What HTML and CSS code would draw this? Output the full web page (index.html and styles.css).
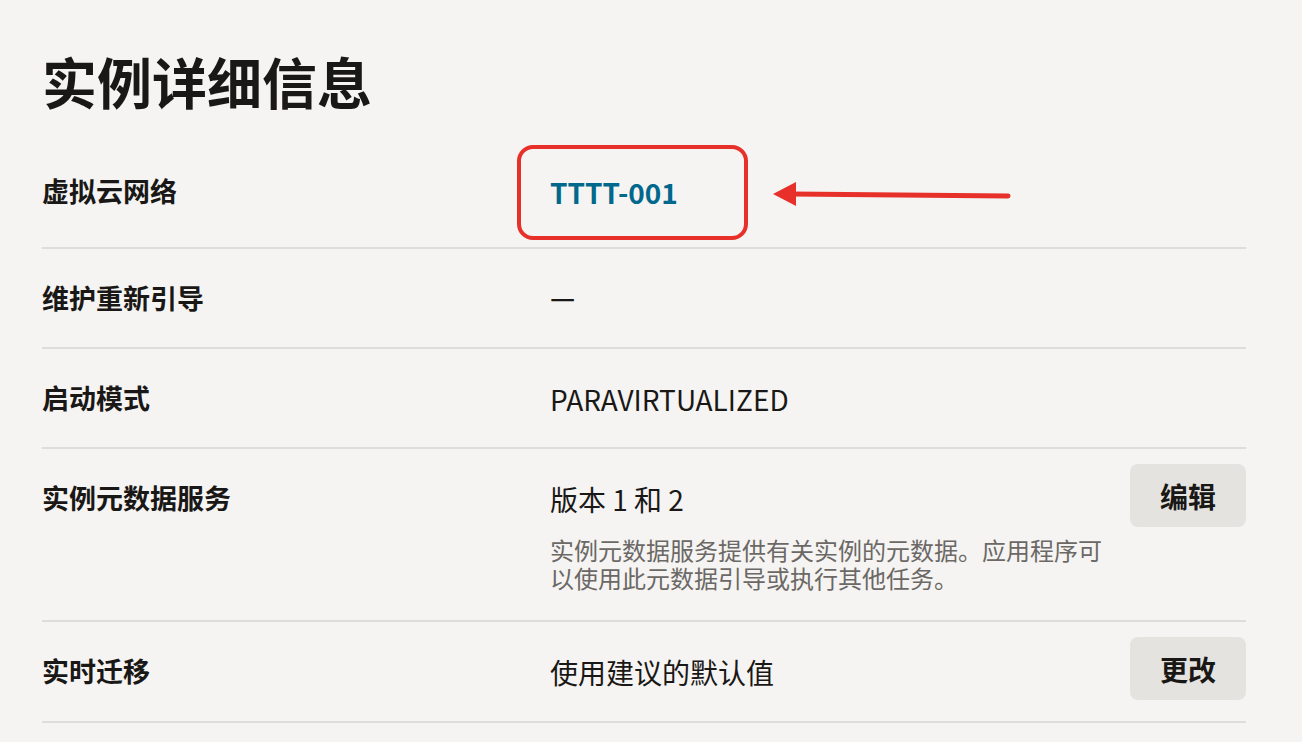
FILE: index.html
```html
<!DOCTYPE html>
<html>
    <head>
        <meta charset="utf-8">
        <title>实例详细信息</title>
        <link rel="stylesheet" href="styles.css">
    </head>
    <body>
        <div class="page">
            <h1 class="title">实例详细信息</h1>
            <div class="list">
                <div class="row first">
                    <div class="label">虚拟云网络</div>
                    <div class="value"><a class="link" href="#">TTTT-001</a></div>
                    <div class="mark"></div>
                    <svg class="arrow" width="245" height="30" viewBox="0 0 245 30">
                        <line x1="22" y1="14" x2="238" y2="16" stroke="#e8302a" stroke-width="5" stroke-linecap="round"/>
                        <polygon points="3,14 26,2 26,26" fill="#e8302a"/>
                    </svg>
                </div>
                <div class="row">
                    <div class="label">维护重新引导</div>
                    <div class="value"><span class="dash">—</span></div>
                </div>
                <div class="row">
                    <div class="label">启动模式</div>
                    <div class="value">PARAVIRTUALIZED</div>
                </div>
                <div class="row">
                    <div class="label">实例元数据服务</div>
                    <div class="value">
                        版本 1 和 2
                        <p class="desc">实例元数据服务提供有关实例的元数据。应用程序可以使用此元数据引导或执行其他任务。</p>
                    </div>
                    <button class="btn">编辑</button>
                </div>
                <div class="row">
                    <div class="label">实时迁移</div>
                    <div class="value">使用建议的默认值</div>
                    <button class="btn">更改</button>
                </div>
            </div>
        </div>
    </body>
</html>
```
FILE: styles.css
```css
*{
    margin:0;
    padding:0;
    box-sizing:border-box;
}
body{
    background-color:#f5f4f2;
    color:#1a1816;
    font-family:"Noto Sans CJK SC","Noto Sans",sans-serif;
}
.page{
    padding:0 56px 0 42px;
}
.title{
    font-size:55px;
    line-height:67px;
    font-weight:700;
    margin:47px 0 28px;
}
.row{
    display:grid;
    grid-template-columns:484px 1fr auto;
    column-gap:24px;
    min-height:100px;
    padding:15px 0 21px;
    border-bottom:2px solid #dfddda;
    position:relative;
}
.row.first{
    min-height:107px;
}
.label{
    font-size:27px;
    line-height:36px;
    font-weight:700;
    margin-top:16px;
}
.value{
    font-size:28px;
    line-height:36px;
    padding-top:17px;
}
.dash{
    display:inline-block;
    font-weight:500;
    transform:translateY(-3px);
}
.link{
    color:#00688c;
    font-weight:700;
    text-decoration:none;
}
.desc{
    font-size:24px;
    line-height:28px;
    color:#6b6865;
    margin:19px 0 7px;
}
.btn{
    width:116px;
    height:63px;
    border:0;
    border-radius:8px;
    background-color:#e5e3e0;
    color:#1a1816;
    font-family:inherit;
    font-size:28px;
    font-weight:700;
    align-self:start;
}
.mark{
    position:absolute;
    left:475px;
    top:3px;
    width:231px;
    height:95px;
    border:4px solid #e8302a;
    border-radius:16px;
}
.arrow{
    position:absolute;
    left:728px;
    top:38px;
}
```
